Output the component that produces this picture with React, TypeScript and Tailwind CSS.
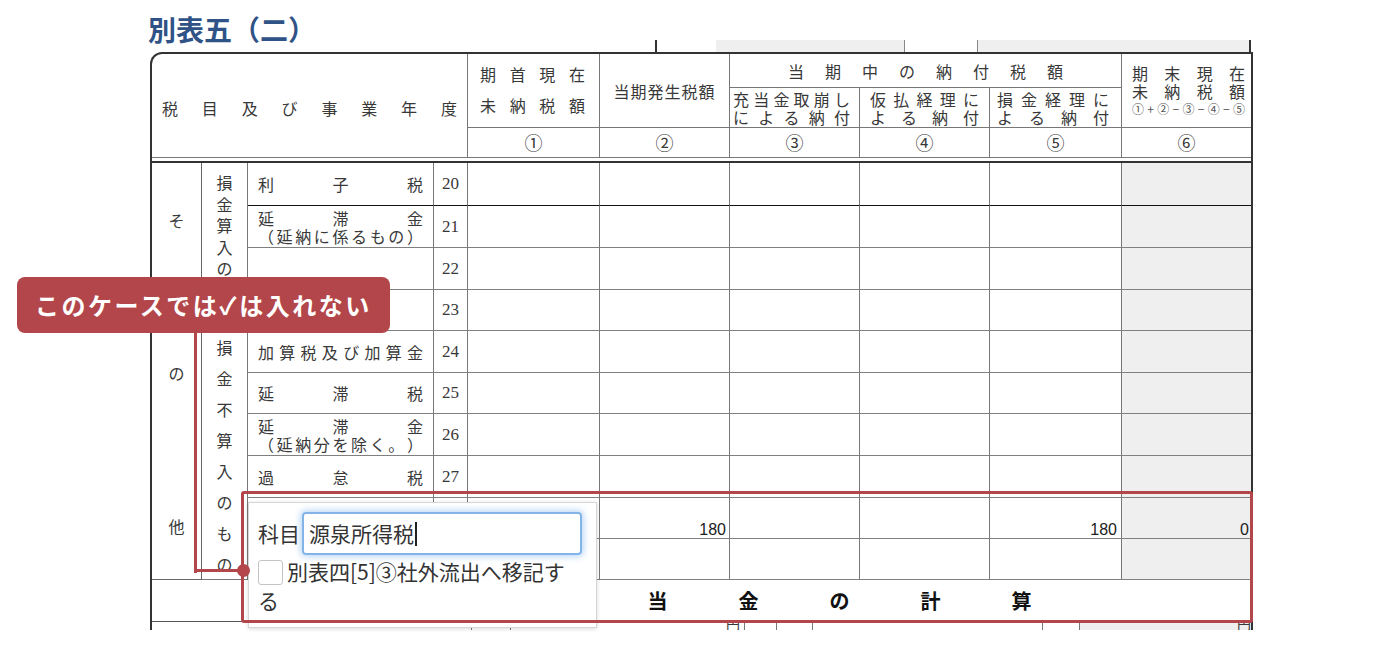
import React from "react";

function J({ t, cls = "" }: { t: string; cls?: string }) {
  return (
    <div className={"flex justify-between " + cls}>
      {Array.from(t).map((c, i) => (
        <span key={i}>{c}</span>
      ))}
    </div>
  );
}

const rows: { name?: string[]; num: string; vals?: [string, string, string] }[] = [
  { name: ["利子税"], num: "20" },
  { name: ["延滞金", "（延納に係るもの）"], num: "21" },
  { num: "22" },
  { num: "23" },
  { name: ["加算税及び加算金"], num: "24" },
  { name: ["延滞税"], num: "25" },
  { name: ["延滞金", "（延納分を除く。）"], num: "26" },
  { name: ["過怠税"], num: "27" },
  { num: "28", vals: ["180", "180", "0"] },
  { num: "29" },
];

export default function App() {
  return (
    <div className="relative w-[1400px] h-[650px] bg-white overflow-hidden font-['Noto_Sans_CJK_JP',sans-serif] text-[#383838]">
      {/* top area */}
      <div className="h-[52px] flex">
        <div className="w-[655px] pl-[148px] pt-[14px]">
          <div className="text-[28px] leading-[30px] font-bold text-[#2f5386]">別表五（二）</div>
        </div>
        <div className="flex items-end">
          <div className="h-[12px] flex w-[598px]">
            <div className="w-[2px] bg-[#333]" />
            <div className="w-[59px]" />
            <div className="w-[189px] bg-[#efefef] border-r border-[#888]" />
            <div className="w-[73px] border-r border-[#888]" />
            <div className="w-[273px] bg-[#efefef] border-r-2 border-[#333]" />
          </div>
        </div>
      </div>

      {/* table */}
      <div className="ml-[150px] w-[1103px] h-[578px] border-l-2 border-r-2 border-t-2 border-[#333] rounded-tl-[12px] overflow-hidden">
        {/* header */}
        <div className="grid grid-cols-[50px_46px_186px_34px_132px_130px_130px_130px_132px_129px] grid-rows-[34px_40px_30px] text-[16px]">
          <div className="col-start-1 col-span-4 row-start-1 row-span-3 border-r border-b border-[#777] flex items-center px-[10px] pt-[4px]">
            <J t="税目及び事業年度" cls="w-full" />
          </div>
          <div className="col-start-5 row-start-1 row-span-2 border-r border-b border-[#777] flex flex-col justify-center gap-[14px] pl-[12px] pr-[14px] leading-[17px] pb-[2px]">
            <J t="期首現在" />
            <J t="未納税額" />
          </div>
          <div className="col-start-6 row-start-1 row-span-2 border-r border-b border-[#777] flex items-center justify-center tracking-[1px]">
            当期発生税額
          </div>
          <div className="col-start-7 col-span-3 row-start-1 border-r border-b border-[#777] flex items-center px-[58px]">
            <J t="当期中の納付税額" cls="w-full" />
          </div>
          <div className="col-start-10 row-start-1 row-span-2 border-b border-[#777] flex flex-col justify-center pl-[10px] pr-[6px]">
            <J t="期末現在" cls="leading-[18px]" />
            <J t="未納税額" cls="leading-[18px]" />
            <J t="①+②−③−④−⑤" cls="leading-[18px] text-[12px] text-[#555]" />
          </div>
          <div className="col-start-7 row-start-2 border-r border-b border-[#777] flex flex-col justify-center pl-[3px] pr-[9px] leading-[18px]">
            <J t="充当金取崩し" />
            <J t="による納付" />
          </div>
          <div className="col-start-8 row-start-2 border-r border-b border-[#777] flex flex-col justify-center px-[10px] leading-[18px]">
            <J t="仮払経理に" />
            <J t="よる納付" />
          </div>
          <div className="col-start-9 row-start-2 border-r border-b border-[#777] flex flex-col justify-center pl-[7px] pr-[12px] leading-[18px]">
            <J t="損金経理に" />
            <J t="よる納付" />
          </div>
          {["①", "②", "③", "④", "⑤"].map((c) => (
            <div key={c} className="row-start-3 border-r border-b border-[#777] flex items-center justify-center text-[18px]">
              {c}
            </div>
          ))}
          <div className="row-start-3 border-b border-[#777] flex items-center justify-center text-[18px]">⑥</div>
        </div>
        <div className="h-[3px]" />
        {/* body */}
        <div className="border-t-2 border-[#333] grid grid-cols-[50px_46px_186px_34px_132px_130px_130px_130px_132px_129px] grid-rows-[43px_42px_42px_41px_42px_41px_42px_42px_41px_41px] text-[16px]">
          <div className="col-start-1 row-start-1 row-span-10 border-r border-b border-[#666] flex flex-col justify-between items-center pt-[48px] pb-[44px] leading-[18px]">
            <span>そ</span>
            <span>の</span>
            <span>他</span>
          </div>
          <div className="col-start-2 row-start-1 row-span-4 border-r border-b border-[#777] flex flex-col items-center pt-[9px] leading-[21.5px]">
            {Array.from("損金算入のもの").map((c, i) => (
              <span key={i}>{c}</span>
            ))}
          </div>
          <div className="col-start-2 row-start-5 row-span-6 border-r border-b border-[#777] flex flex-col justify-between items-center pt-[6px] pb-[5px] leading-[20px]">
            {Array.from("損金不算入のもの").map((c, i) => (
              <span key={i}>{c}</span>
            ))}
          </div>
          {rows.map((r, i) => {
            const bb = i === 0 ? "border-b border-b-[#111]" : "border-b border-b-[#808080]";
            return (
              <React.Fragment key={r.num}>
                <div className={"border-r border-r-[#777] flex flex-col justify-center px-[10px] leading-[18px] " + bb}>
                  {r.name?.map((n, k) => (
                    <J key={k} t={n} />
                  ))}
                </div>
                <div className={"border-r border-r-[#777] flex items-center justify-center font-['Liberation_Serif',serif] text-[17px] " + bb}>
                  {r.num}
                </div>
                <div className={"border-r border-r-[#777] " + bb} />
                <div className={"border-r border-r-[#777] flex items-end justify-end pr-[3px] font-['Liberation_Sans',sans-serif] text-[16px] leading-[16px] text-[#222] " + bb}>
                  {r.vals?.[0]}
                </div>
                <div className={"border-r border-r-[#777] " + bb} />
                <div className={"border-r border-r-[#777] " + bb} />
                <div className={"border-r border-r-[#777] flex items-end justify-end pr-[4px] font-['Liberation_Sans',sans-serif] text-[16px] leading-[16px] text-[#222] " + bb}>
                  {r.vals?.[1]}
                </div>
                <div className={"bg-[#efefef] flex items-end justify-end pr-[2px] font-['Liberation_Sans',sans-serif] text-[16px] leading-[16px] text-[#222] " + bb}>
                  {r.vals?.[2]}
                </div>
              </React.Fragment>
            );
          })}
        </div>
        {/* calc row */}
        <div className="h-[42px] border-b border-[#555] flex items-center pl-[187px] text-[20px] font-bold text-[#111]">
          {Array.from("納税充当金の計算").map((c, i) => (
            <div key={i} className="w-[91px] text-center">
              {c}
            </div>
          ))}
        </div>
        {/* partial row */}
        <div className="h-[8px] flex overflow-hidden text-[14px] leading-[14px]">
          <div className="w-[320px] border-r border-[#777]" />
          <div className="w-[39px] border-r border-[#777]" />
          <div className="w-[234px] border-r border-[#777] flex justify-end pr-[4px] -mt-[6px]">円</div>
          <div className="w-[32px] border-r border-[#777]" />
          <div className="w-[36px] border-r border-[#777]" />
          <div className="w-[230px] border-r border-[#777]" />
          <div className="w-[37px] border-r border-[#777]" />
          <div className="flex-1 bg-[#efefef] flex justify-end -mt-[6px]">円</div>
        </div>
      </div>

      {/* connector */}
      <div className="absolute left-[194px] top-[333px] w-[3px] h-[240px] bg-[#b3464a]" />
      <div className="absolute left-[194px] top-[569px] w-[50px] h-[3px] bg-[#b3464a]" />

      {/* popup */}
      <div className="absolute left-[248px] top-[502px] w-[349px] h-[126px] bg-white border border-[#d6d6d6] shadow-[0_1px_4px_rgba(0,0,0,0.15)] pl-[9px] pt-[9px] text-[21px] text-[#333]">
        <div className="flex items-center">
          <span className="w-[44px] leading-[43px]">科目</span>
          <div className="w-[280px] h-[43px] border-2 border-[#82b4e8] rounded-[4px] shadow-[0_0_6px_2px_rgba(110,170,235,0.45)] flex items-center pl-[5px]">
            <span>源泉所得税</span>
            <span className="w-[1.5px] h-[24px] bg-[#222] ml-[1px]" />
          </div>
        </div>
        <div className="mt-[2px] leading-[29px]">
          <span className="inline-block w-[25px] h-[25px] border border-[#c4c4c4] rounded-[3px] align-middle mr-[4px] -mt-[3px]" />
          <span className="whitespace-nowrap">別表四[5]③社外流出へ移記す</span>
          <br />
          る
        </div>
      </div>

      {/* red highlight box */}
      <div className="absolute left-[241px] top-[491px] w-[1012px] h-[132px] border-[3px] border-[#b3464a] rounded-[3px]" />
      <div className="absolute left-[237px] top-[564px] w-[13px] h-[13px] rounded-full bg-[#b3464a]" />

      {/* tooltip */}
      <div className="absolute left-[17px] top-[277px] w-[373px] h-[56px] rounded-[8px] bg-[#b3464a] flex items-center pl-[18px] text-white font-bold text-[24px] tracking-[2.5px]">
        このケースでは✓は入れない
      </div>
    </div>
  );
}
